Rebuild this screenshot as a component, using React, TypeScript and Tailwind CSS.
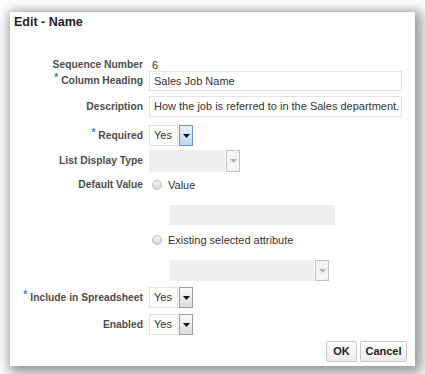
import React from "react";

const Star = () => (
  <span className="text-[#3b7dd8] text-[10px] relative -top-[3px] mr-[3px] font-bold">*</span>
);

const Label = ({ children, req }: { children: React.ReactNode; req?: boolean }) => (
  <div className="w-[139px] shrink-0 text-right pr-[6px] font-bold text-[#4d4d4d] text-[10.3px] whitespace-nowrap">
    {req && <Star />}
    {children}
  </div>
);

const Caret = ({ light }: { light?: boolean }) => (
  <svg width="7" height="4" viewBox="0 0 7 4">
    <path d="M0 0 L7 0 L3.5 4 Z" fill={light ? "#b5b5b5" : "#111"} />
  </svg>
);

const YesSelect = ({ active }: { active?: boolean }) => (
  <div className="flex items-center h-[21px]">
    <div className="w-[29px] h-full border border-[#e2e2e2] bg-white flex items-center pl-[4px] text-[#333]">
      Yes
    </div>
    <div
      className={
        "ml-[1px] w-[14px] h-full flex items-center justify-center border " +
        (active
          ? "border-[#6d93c4] bg-gradient-to-b from-[#e6f1fb] to-[#bcd8f3]"
          : "border-[#9d9d9d] bg-gradient-to-b from-[#fafafa] to-[#dcdcdc]")
      }
    >
      <Caret />
    </div>
  </div>
);

const Radio = ({ text }: { text: string }) => (
  <div className="flex items-center">
    <div className="w-[10px] h-[10px] rounded-full border border-[#bdbdbd] bg-gradient-to-b from-[#f4f4f4] to-[#dadada] ml-[3px]" />
    <span className="ml-[6px] text-[#333]">{text}</span>
  </div>
);

export default function App() {
  return (
    <div
      className="w-[425px] h-[374px] bg-white overflow-hidden pt-[12px] pl-[10px] text-[11px]"
      style={{ fontFamily: '"Liberation Sans", Arial, sans-serif' }}
    >
      <div className="w-[405px] h-[354px] bg-white shadow-[3px_3px_12px_4px_rgba(0,0,0,0.42)] flex flex-col">
        <div className="h-[18px] mt-[1px] pl-[4px] flex items-center font-bold text-[12.5px] text-[#222]">
          Edit - Name
        </div>

        <div className="mt-[28px] h-[12px] flex items-center">
          <Label>Sequence Number</Label>
          <div className="pl-[3px] text-[#333]">6</div>
        </div>

        <div className="h-[20px] flex items-center">
          <Label req>Column Heading</Label>
          <div className="w-[253px] h-full border border-[#e2e2e2] flex items-center pl-[4px] text-[#333]">
            Sales Job Name
          </div>
        </div>

        <div className="mt-[5px] h-[21px] flex items-center">
          <Label>Description</Label>
          <div className="w-[253px] h-full border border-[#e2e2e2] flex items-center pl-[4px] text-[#333] whitespace-nowrap">
            How the job is referred to in the Sales department.
          </div>
        </div>

        <div className="mt-[8px] h-[21px] flex items-center">
          <Label req>Required</Label>
          <YesSelect active />
        </div>

        <div className="mt-[4px] h-[22px] flex items-center">
          <Label>List Display Type</Label>
          <div className="flex h-full">
            <div className="w-[76px] h-full bg-[#efefef]" />
            <div className="ml-[1px] w-[14px] h-full border border-[#c4c4c4] bg-[#f4f4f4] flex items-center justify-center">
              <Caret light />
            </div>
          </div>
        </div>

        <div className="mt-[5px] h-[16px] flex items-center">
          <Label>Default Value</Label>
          <Radio text="Value" />
        </div>

        <div className="mt-[12px] h-[20px] flex">
          <div className="w-[160px] shrink-0" />
          <div className="w-[165px] h-full bg-[#efefef]" />
        </div>

        <div className="mt-[7px] h-[16px] flex items-center">
          <div className="w-[139px] shrink-0" />
          <Radio text="Existing selected attribute" />
        </div>

        <div className="mt-[12px] h-[21px] flex">
          <div className="w-[160px] shrink-0" />
          <div className="w-[144px] h-full bg-[#efefef]" />
          <div className="ml-[1px] w-[14px] h-full border border-[#c4c4c4] bg-[#f4f4f4] flex items-center justify-center">
            <Caret light />
          </div>
        </div>

        <div className="mt-[6px] h-[21px] flex items-center">
          <Label req>Include in Spreadsheet</Label>
          <YesSelect />
        </div>

        <div className="mt-[6px] h-[21px] flex items-center">
          <Label>Enabled</Label>
          <YesSelect />
        </div>

        <div className="mt-[6px] h-[21px] flex justify-end pr-[8px] gap-[3px]">
          <button className="w-[31px] h-full border border-[#c9c9c9] rounded-[2px] bg-gradient-to-b from-[#ffffff] to-[#ececec] font-bold text-[#222] text-[11px]">
            OK
          </button>
          <button className="w-[47px] h-full border border-[#c9c9c9] rounded-[2px] bg-gradient-to-b from-[#ffffff] to-[#ececec] font-bold text-[#222] text-[11px]">
            Cancel
          </button>
        </div>
      </div>
    </div>
  );
}
